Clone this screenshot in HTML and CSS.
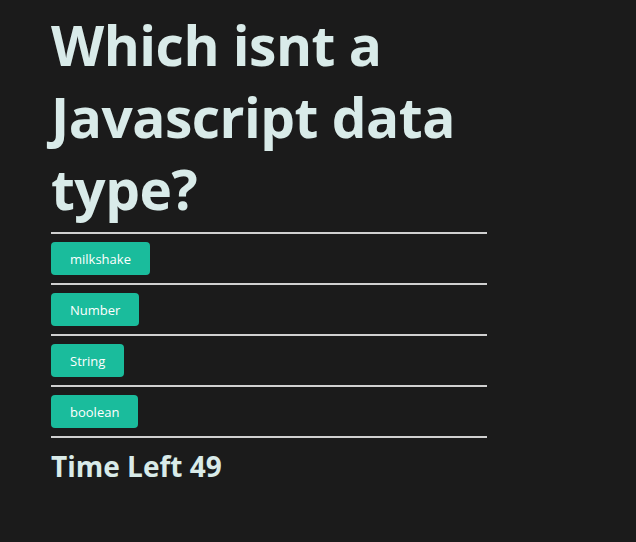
FILE: index.html
```html
<!DOCTYPE html>
<html>
<head>
<meta charset="utf-8">
<link rel="stylesheet" href="styles.css">
</head>
<body>
<main class="quiz">
  <h1 class="question">Which isnt a Javascript data type?</h1>
  <hr class="rule">
  <div class="choice"><button class="btn">milkshake</button></div>
  <hr class="rule">
  <div class="choice"><button class="btn">Number</button></div>
  <hr class="rule">
  <div class="choice"><button class="btn">String</button></div>
  <hr class="rule">
  <div class="choice"><button class="btn">boolean</button></div>
  <hr class="rule">
  <h2 class="timer">Time Left 49</h2>
</main>
</body>
</html>
```
FILE: styles.css
```css
html, body {
  margin: 0;
  padding: 0;
  background: #1b1b1b;
  height: 100%;
}
body {
  font-family: "Open Sans", "Noto Sans", sans-serif;
  color: #d9ebe9;
}
.quiz {
  width: 436px;
  padding: 9px 0 0 51px;
  display: flex;
  flex-direction: column;
}
.question {
  margin: 0 0 7px;
  font-size: 55px;
  line-height: 72px;
  font-weight: 700;
  letter-spacing: -0.5px;
}
.rule {
  margin: 0;
  border: 0;
  height: 2px;
  background: #d0d0d0;
}
.choice {
  padding: 8px 0;
  display: flex;
}
.btn {
  font-family: "Open Sans", "Noto Sans", sans-serif;
  font-size: 13px;
  height: 33px;
  padding: 0 19px;
  border: 0;
  border-radius: 4px;
  background: #1abc9c;
  color: #ffffff;
}
.timer {
  margin: 12px 0 0;
  font-size: 28px;
  font-weight: 700;
  line-height: 32px;
}
```
